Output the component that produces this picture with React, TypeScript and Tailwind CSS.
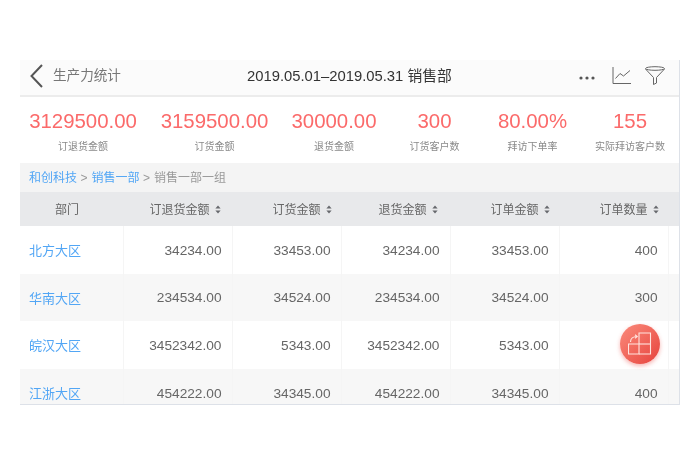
const kpis = [
  ["3129500.00", "订退货金额"],
  ["3159500.00", "订货金额"],
  ["30000.00", "退货金额"],
  ["300", "订货客户数"],
  ["80.00%", "拜访下单率"],
  ["155", "实际拜访客户数"],
];

const crumbs = ["和创科技", "销售一部"];

const columns = [
  { label: "订退货金额", pad: "pr-3" },
  { label: "订货金额", pad: "pr-2.5" },
  { label: "退货金额", pad: "pr-[13px]" },
  { label: "订单金额", pad: "pr-2.5" },
  { label: "订单数量", pad: "pr-2.5" },
];

const rows = [
  ["北方大区", "34234.00", "33453.00", "34234.00", "33453.00", "400"],
  ["华南大区", "234534.00", "34524.00", "234534.00", "34524.00", "300"],
  ["皖汉大区", "3452342.00", "5343.00", "3452342.00", "5343.00", "300"],
  ["江浙大区", "454222.00", "34345.00", "454222.00", "34345.00", "400"],
];

const gridCols = "grid grid-cols-[103.5px_repeat(5,109px)_1fr]";

function SortIcon() {
  return (
    <svg width="6" height="9" viewBox="0 0 6 9" className="shrink-0 text-[#66686c]">
      <path d="M3 0.5 L5.6 3.6 H0.4 Z" fill="currentColor" />
      <path d="M3 8.5 L5.6 5.4 H0.4 Z" fill="currentColor" />
    </svg>
  );
}

function Header() {
  return (
    <header className="relative flex h-[37px] shrink-0 items-center border-b-2 border-[#ececec] bg-[#fbfbfb] pb-[3px]">
      <svg width="16" height="24" viewBox="0 0 16 24" className="ml-[8px] text-[#555555]">
        <path d="M14 1 L3.5 12 L14 23" fill="none" stroke="currentColor" strokeWidth="2" />
      </svg>
      <span className="ml-[9px] text-[13.6px] text-[#777777]">生产力统计</span>
      <span className="ml-[126px] text-[14.8px] whitespace-nowrap text-[#333333]">
        2019.05.01–2019.05.31 销售部
      </span>
      <svg width="16" height="4" viewBox="0 0 16 4" className="mt-[3px] ml-auto text-[#555555]">
        <circle cx="2" cy="2" r="1.6" fill="currentColor" />
        <circle cx="8" cy="2" r="1.6" fill="currentColor" />
        <circle cx="14" cy="2" r="1.6" fill="currentColor" />
      </svg>
      <svg width="20" height="20" viewBox="0 0 20 20" className="-mt-[1px] ml-[17px] text-[#666666]">
        <path
          d="M1 1 V17.5 H19 M3.5 12.5 L8 7.5 L11.5 10 L18 4.5"
          fill="none"
          stroke="currentColor"
          strokeWidth="1"
        />
      </svg>
      <svg width="22" height="20" viewBox="0 0 22 20" className="-mt-[1px] mr-[13px] ml-[12px] text-[#666666]">
        <ellipse cx="11" cy="2.5" rx="9.5" ry="1.8" fill="none" stroke="currentColor" strokeWidth="1" />
        <path
          d="M1.5 3 L9.5 11.5 V18.5 L12.5 17 V11.5 L20.5 3"
          fill="none"
          stroke="currentColor"
          strokeWidth="1"
        />
      </svg>
    </header>
  );
}

function Kpis() {
  return (
    <section className="grid h-[66px] shrink-0 grid-cols-[126px_137px_102px_99px_97px_98px] bg-white pt-[9px]">
      {kpis.map(([value, label]) => (
        <div key={label} className="flex flex-col items-center">
          <span className="text-[20.4px] leading-[30px] text-[#fb6a6a]">{value}</span>
          <span className="mt-1 text-[10px] leading-[14px] whitespace-nowrap text-[#8a8a8a]">
            {label}
          </span>
        </div>
      ))}
    </section>
  );
}

function Breadcrumb() {
  return (
    <nav className="flex h-[29px] shrink-0 items-center gap-1 bg-[#f4f4f4] pl-[9px] text-[12px]">
      {crumbs.map((crumb) => (
        <span key={crumb} className="flex items-center gap-[3.5px]">
          <span className="text-[#52a6f5]">{crumb}</span>
          <span className="text-[#999999]">&gt;</span>
        </span>
      ))}
      <span className="text-[#999999]">销售一部一组</span>
    </nav>
  );
}

function Table() {
  return (
    <div className="min-h-0 flex-1 overflow-hidden">
      <div className={`${gridCols} h-[34px] items-center bg-[#e8e9eb] pt-[1px] text-[12px] text-[#666666]`}>
        <span className="pl-[35px]">部门</span>
        {columns.map((col) => (
          <span key={col.label} className={`flex items-center justify-end gap-[5px] ${col.pad}`}>
            {col.label}
            <SortIcon />
          </span>
        ))}
      </div>
      {rows.map((row, i) => (
        <div
          key={row[0]}
          className={`${gridCols} h-[47.7px] items-stretch ${i % 2 === 1 ? "bg-[#f7f7f7]" : "bg-white"}`}
        >
          <span className="flex items-center border-r border-[#f5f5f5] pt-[2px] pl-[9px] text-[13px] text-[#52a6f5]">
            {row[0]}
          </span>
          {row.slice(1).map((cell, j) => (
            <span
              key={j}
              className="flex items-center justify-end border-r border-[#f5f5f5] pt-[2px] pr-2.5 text-[13.7px] text-[#666666]"
            >
              {cell}
            </span>
          ))}
          <span />
        </div>
      ))}
    </div>
  );
}

function Fab() {
  return (
    <button className="absolute top-[264px] left-[600px] flex h-10 w-10 items-center justify-center rounded-full bg-gradient-to-br from-[#fa8a7c] to-[#e63f3c] shadow-[0_2px_4px_rgba(235,70,65,0.4)]">
      <svg width="24" height="24" viewBox="0 0 24 24" fill="none" stroke="#ffe3de" strokeWidth="1.1">
        <path d="M0.5 12 H11 V22 H0.5 Z" />
        <path d="M11 22 H22.5 V1 H11 V12" />
        <path d="M11 12 H22.5" />
        <path d="M2.5 10 C2.5 6.5 5 4.5 9 4.5" />
        <path d="M7 2.8 L9.2 4.5 L7 6.2" />
      </svg>
    </button>
  );
}

export default function App() {
  return (
    <div className="h-[470px] w-[700px] bg-white pt-[60px] pl-5 font-['Liberation_Sans','Noto_Sans_CJK_SC',sans-serif] blur-[0.3px]">
      <div className="relative flex h-[345px] w-[660px] flex-col overflow-hidden border-r border-b border-[#dde1e8]">
        <Header />
        <Kpis />
        <Breadcrumb />
        <Table />
        <Fab />
      </div>
    </div>
  );
}
